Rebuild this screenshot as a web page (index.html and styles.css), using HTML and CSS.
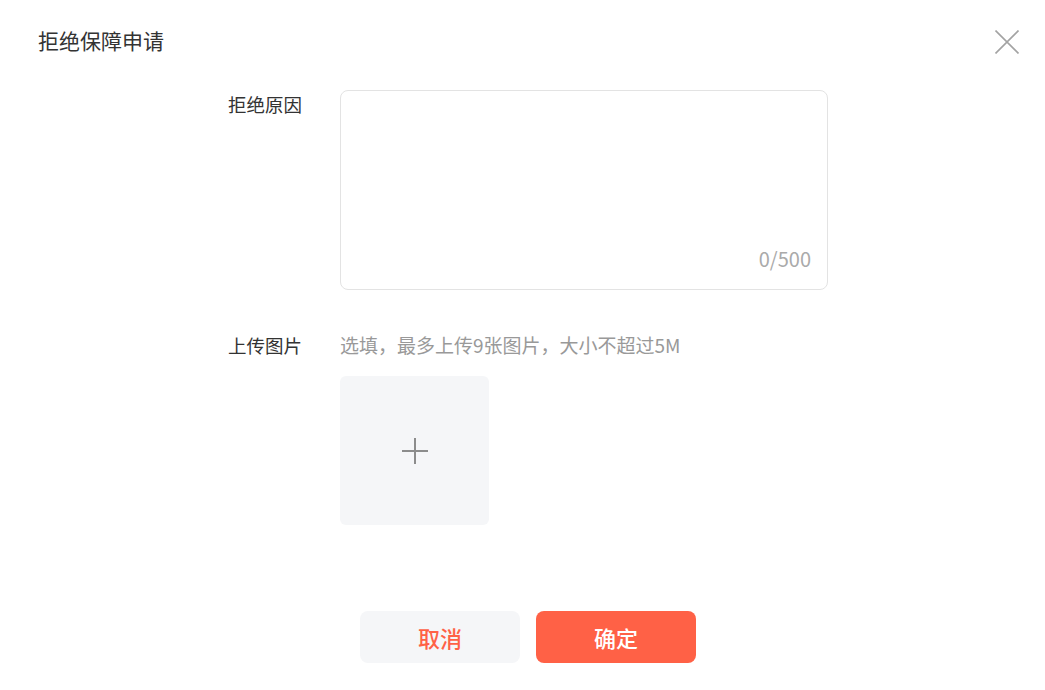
FILE: index.html
```html
<!DOCTYPE html>
<html lang="zh-CN">
<head>
    <meta charset="UTF-8">
    <meta name="viewport" content="width=device-width, initial-scale=1.0">
    <title>拒绝保障申请</title>
    <link rel="stylesheet" href="styles.css">
</head>
<body>
    <div class="dialog">
        <div class="dialog-header">
            <h1 class="dialog-title">拒绝保障申请</h1>
            <button class="close-btn" aria-label="关闭">
                <svg width="24" height="24" viewBox="0 0 24 24">
                    <path d="M0.5 0.5 L23.5 23.5 M23.5 0.5 L0.5 23.5" stroke="#a3a3a3" stroke-width="1.6" fill="none"/>
                </svg>
            </button>
        </div>

        <div class="form">
            <div class="form-row">
                <label class="form-label" for="reason">拒绝原因</label>
                <div class="textarea-box">
                    <textarea id="reason" maxlength="500"></textarea>
                    <div class="counter">0/500</div>
                </div>
            </div>

            <div class="form-row upload-row">
                <div class="form-label">上传图片</div>
                <div class="upload-field">
                    <div class="hint">选填，最多上传9张图片，大小不超过5M</div>
                    <div class="upload-box">
                        <svg width="28" height="28" viewBox="0 0 28 28">
                            <path d="M14 1 V27 M1 14 H27" stroke="#8c8c8c" stroke-width="2" fill="none"/>
                        </svg>
                    </div>
                </div>
            </div>
        </div>

        <div class="dialog-footer">
            <button class="btn btn-cancel">取消</button>
            <button class="btn btn-primary">确定</button>
        </div>
    </div>
</body>
</html>
```

FILE: styles.css
```css
* {
    margin: 0;
    padding: 0;
    box-sizing: border-box;
}

body {
    background: #fff;
    font-family: "Noto Sans CJK SC", "Noto Sans", sans-serif;
    color: #333;
}

.dialog {
    width: 1045px;
    height: 690px;
}

/* Header */
.dialog-header {
    display: flex;
    justify-content: space-between;
    align-items: flex-start;
    padding: 28px 26px 0 38px;
    height: 58px;
}

.dialog-title {
    font-size: 21px;
    font-weight: normal;
    line-height: 26px;
    margin-top: -1px;
    color: #333;
}

.close-btn {
    border: none;
    background: none;
    width: 24px;
    height: 24px;
    margin-top: 2px;
    cursor: pointer;
    display: flex;
}

/* Form */
.form {
    margin-top: 32px;
}

.form-row {
    display: flex;
}

.form-label {
    flex: 0 0 302px;
    margin-right: 38px;
    text-align: right;
    font-size: 18.5px;
    line-height: 28px;
    color: #333;
}

.textarea-box {
    width: 488px;
    height: 200px;
    border: 1px solid #e3e3e3;
    border-radius: 8px;
    display: flex;
    flex-direction: column;
    padding: 10px 16px 16px 16px;
}

.textarea-box textarea {
    flex: 1;
    border: none;
    outline: none;
    resize: none;
    font-family: inherit;
    font-size: 18px;
    color: #333;
}

.counter {
    text-align: right;
    font-size: 20px;
    line-height: 28px;
    color: #aaa;
}

.upload-row {
    margin-top: 41px;
}

.hint {
    font-size: 19px;
    line-height: 28px;
    color: #999;
    margin-bottom: 17px;
}

.upload-box {
    width: 149px;
    height: 149px;
    background: #f5f6f8;
    border-radius: 6px;
    display: flex;
    align-items: center;
    justify-content: center;
    cursor: pointer;
}

/* Footer */
.dialog-footer {
    display: flex;
    justify-content: center;
    gap: 16px;
    padding-left: 11px;
    margin-top: 86px;
}

.btn {
    width: 160px;
    height: 52px;
    border: none;
    border-radius: 8px;
    font-family: inherit;
    font-size: 22px;
    font-weight: 500;
    cursor: pointer;
}

.btn-cancel {
    background: #f5f6f8;
    color: #ff6146;
}

.btn-primary {
    background: #ff6146;
    color: #fff;
}
```
